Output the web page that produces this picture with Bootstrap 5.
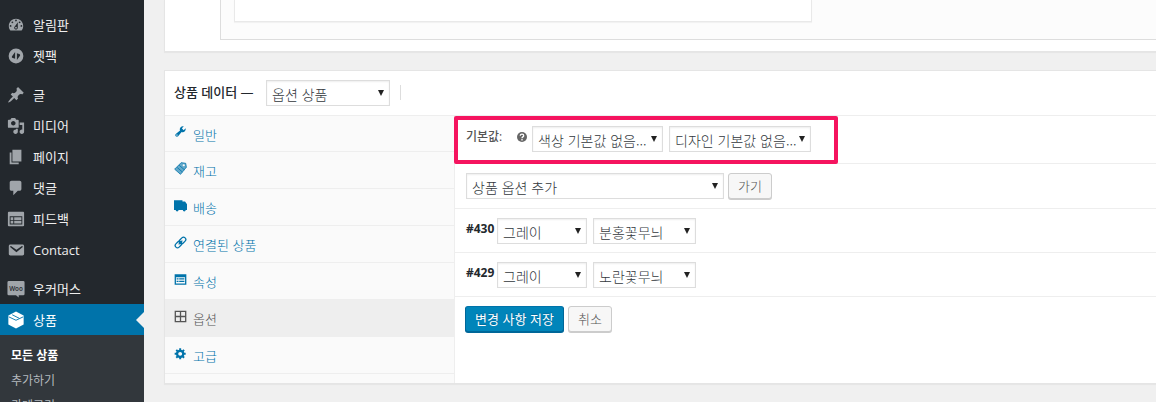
<!DOCTYPE html>
<html lang="ko">
<head>
<meta charset="utf-8">
<meta name="viewport" content="width=device-width, initial-scale=1">
<title>상품 편집</title>
<link href="https://cdn.jsdelivr.net/npm/bootstrap@5.3.0/dist/css/bootstrap.min.css" rel="stylesheet">
<script src="https://cdn.jsdelivr.net/npm/bootstrap@5.3.0/dist/js/bootstrap.bundle.min.js"></script>
<style>
body{font-family:"Open Sans","Noto Sans CJK KR",sans-serif;font-size:13px;line-height:20px;color:#444;background:#f0f0f0}
a{text-decoration:none}
svg{fill:currentColor;flex:none}
.side{width:144px;background:#23282d;padding-top:9px}
.side-item{height:31px;padding-left:6px;gap:7px;color:#eee}
.side-item svg{width:20px;height:20px;padding:1px;color:#a0a5aa}
.side-gap{margin-top:8px}
.side-item.current{background:#0073aa;color:#fff;position:relative}
.side-item.current svg{color:#fff}
.side-item.current::after{content:"";position:absolute;right:0;top:8px;border:8px solid transparent;border-right-color:#f0f0f0;border-left:0}
.side-sub{background:#32373c;padding:8px 0 7px 11px}
.side-sub a{height:25px;line-height:25px;font-size:12px;color:#b4b9be;display:block}
.side-sub a.current{color:#fff;font-weight:700}
.main-col{padding-left:20px}
.panel-box{background:#fff;border:1px solid #e5e5e5;border-right:0;box-shadow:0 1px 1px rgba(0,0,0,.04)}
.editor-panel{height:52px;padding-left:55px;margin-bottom:18px}
.editor-frame{height:40px;background:#fcfcfc;border:solid #ddd;border-width:0 0 1px 1px;padding-left:13px}
.editor-card{height:22px;width:578px;background:#fff;border:solid #e9e9e9;border-width:0 1px 1px;box-shadow:0 1px 1px rgba(0,0,0,.04)}
.data-head{height:45px;padding:0 9px;border-bottom:1px solid #eee}
.data-head label{font-size:13px;font-weight:500;color:#23282d;width:92px;margin-bottom:3px}
.head-rule{width:1px;height:15px;background:#ddd;margin-left:10px;margin-bottom:2px}
.tabs-col{width:290px;background:#fafafa;border-right:1px solid #eee}
.tab-row{height:37px;padding-left:9px;gap:6px;border-bottom:1px solid #eee;color:#0073aa}
.tab-row:first-child{height:36px}
.tab-row.current{background:#eee;color:#555}
.tab-row svg{width:13px;height:13px;margin-bottom:4px}
.tab-row,.pick,.wp-btn{font-family:"Noto Sans CJK KR",sans-serif;font-weight:300}
.tab-row span{padding-top:2px}
.tabs-end{height:9px}
.pick{appearance:none;height:26px;padding:2px 14px 0 5px;border:1px solid #ddd;border-radius:0;font-size:14px;line-height:20px;color:#32373c;
background:#fff url("data:image/svg+xml,%3Csvg xmlns='http://www.w3.org/2000/svg' width='6' height='6'%3E%3Cpath d='M0 0h6L3 6z' fill='%23222'/%3E%3C/svg%3E") no-repeat right 5px top 9px;box-shadow:inset 0 1px 2px rgba(0,0,0,.07)}
.pick-next{margin-left:6px}
.w-type{width:124px}.w-color{width:131px}.w-design{width:142px}.w-add{width:258px}.w-c{width:90px}.w-d{width:103px}
.opt-row{height:44px;padding-left:11px;border-bottom:1px solid #eee;position:relative}
.opt-row.first{height:48px;padding-bottom:1px}
.opt-row.adder{height:45px}
.opt-row strong{width:31px;color:#23282d;font-size:12px;margin-bottom:3px}
.def-label{width:51px;margin-bottom:4px;font-size:12px;color:#555;font-weight:500}
.help{width:10px;height:10px;color:#666;margin-right:5px;margin-bottom:5px}
.callout{position:absolute;left:-1px;top:0;width:384px;height:48px;border:4px solid #f5145f;border-radius:2px;pointer-events:none;z-index:1}
.wp-btn{height:26px;padding:0 9px;font-size:13px;line-height:22px;border:1px solid #ccc;border-radius:3px;background:#f7f7f7;color:#555;box-shadow:0 1px 0 #ccc}
.wp-btn.blue{background:#0085ba;border-color:#0073aa #006799 #006799;color:#fff;font-weight:400;box-shadow:0 1px 0 #006799;text-shadow:0 -1px 1px #006799}
.save-row{padding:9px 10px}
</style>
</head>
<body>
<div class="d-flex vh-100 overflow-hidden">
<nav class="side flex-shrink-0" aria-label="관리 메뉴">
<a href="#" class="side-item d-flex align-items-center"><svg viewBox="0 0 20 20"><path d="M3.76 16h12.48c1.1-1.37 1.76-3.11 1.76-5 0-4.42-3.58-8-8-8s-8 3.58-8 8c0 1.89.66 3.63 1.76 5zM10 4c.55 0 1 .45 1 1s-.45 1-1 1-1-.45-1-1 .45-1 1-1zM6 6c.55 0 1 .45 1 1s-.45 1-1 1-1-.45-1-1 .45-1 1-1zm8 0c.55 0 1 .45 1 1s-.45 1-1 1-1-.45-1-1 .45-1 1-1zm-5.37 5.55L12 7v6c0 1.1-.9 2-2 2s-2-.9-2-2c0-.57.24-1.08.63-1.45zM4 10c.55 0 1 .45 1 1s-.45 1-1 1-1-.45-1-1 .45-1 1-1zm12 0c.55 0 1 .45 1 1s-.45 1-1 1-1-.45-1-1 .45-1 1-1zm-5 3c0-.55-.45-1-1-1s-1 .45-1 1 .45 1 1 1 1-.45 1-1z" fill-rule="evenodd"/></svg>알림판</a>
<a href="#" class="side-item d-flex align-items-center"><svg viewBox="0 0 20 20"><path fill-rule="evenodd" d="M10 1.800a8.200 8.200 0 1 0 0 16.400a8.200 8.200 0 0 0 0-16.400zM9 5.500v7.500l-2.500-.7c-1-.3-1.400-1.200-.9-2.100zM11 14.500V7l2.500.7c1 .3 1.400 1.200.9 2.100z"/></svg>젯팩</a>
<a href="#" class="side-item side-gap d-flex align-items-center"><svg viewBox="0 0 20 20"><path d="M10.440 3.020l1.820-1.820 6.360 6.350-1.830 1.820c-1.050-.68-2.480-.57-3.410.36l-.75.75c-.92.93-1.040 2.350-.35 3.410l-1.830 1.820-2.410-2.410-2.800 2.790c-.42.42-3.380 2.710-3.800 2.290s1.860-3.390 2.280-3.810l2.790-2.790L4.100 9.360l1.830-1.820c1.050.69 2.480.57 3.400-.36l.75-.75c.93-.92 1.050-2.350.36-3.410z"/></svg>글</a>
<a href="#" class="side-item d-flex align-items-center"><svg viewBox="0 0 20 20"><path fill-rule="evenodd" d="M13 11V4c0-.55-.45-1-1-1h-1.670L9 1H5L3.670 3H2c-.55 0-1 .45-1 1v7c0 .55.45 1 1 1h10c.55 0 1-.45 1-1zM7 4.500c1.380 0 2.500 1.120 2.500 2.500S8.380 9.500 7 9.500 4.500 8.380 4.500 7 5.620 4.500 7 4.500zM14 6h5v10.500c0 1.380-1.120 2.500-2.500 2.500S14 17.880 14 16.500s1.120-2.500 2.500-2.500c.17 0 .34.02.5.05V9h-3V6zm-4 8.050V13h2v3.500c0 1.380-1.120 2.500-2.500 2.500S7 17.880 7 16.500 8.120 14 9.500 14c.17 0 .34.02.5.05z"/></svg>미디어</a>
<a href="#" class="side-item d-flex align-items-center"><svg viewBox="0 0 20 20"><path d="M6 15V2h10v13H6zm-1 1h8v2H3V5h2v11z"/></svg>페이지</a>
<a href="#" class="side-item d-flex align-items-center"><svg viewBox="0 0 20 20"><path d="M5 2h9c1.100 0 2 .9 2 2v7c0 1.100-.9 2-2 2h-2l-5 5v-5H5c-1.100 0-2-.9-2-2V4c0-1.100.9-2 2-2z"/></svg>댓글</a>
<a href="#" class="side-item d-flex align-items-center"><svg viewBox="0 0 20 20"><path fill-rule="evenodd" d="M2 2h16c.55 0 1 .45 1 1v14c0 .55-.45 1-1 1H2c-.55 0-1-.45-1-1V3c0-.55.45-1 1-1zm15 14V7H3v9h14z"/><path d="M4 8v3h3V8zm4 0v3h8V8H8zm-4 4v3h3v-3H4zm4 0v3h8v-3H8z"/></svg>피드백</a>
<a href="#" class="side-item d-flex align-items-center"><svg viewBox="0 0 20 20"><path fill-rule="evenodd" d="M3.870 4h13.250C18.370 4 19 4.590 19 5.790v8.420c0 1.190-.63 1.790-1.880 1.790H3.870c-1.250 0-1.880-.6-1.880-1.790V5.790c0-1.200.63-1.790 1.880-1.790zm6.620 8.600l6.740-5.530c.24-.2.43-.66.13-1.070-.29-.41-.82-.42-1.170-.17l-5.700 3.860L4.800 5.830c-.35-.25-.88-.24-1.170.17-.3.41-.11.87.13 1.070z"/></svg>Contact</a>
<a href="#" class="side-item side-gap d-flex align-items-center"><svg viewBox="0 0 20 20"><path d="M2 1h16a1.500 1.500 0 0 1 1.500 1.500v13a1.500 1.500 0 0 1-1.500 1.500h-5v2.500L10 17H2A1.500 1.500 0 0 1 .5 15.500v-13A1.500 1.500 0 0 1 2 1z"/><text x="10" y="12" font-size="7" font-weight="600" text-anchor="middle" fill="#23282d">Woo</text></svg>우커머스</a>
<a href="#" class="side-item current d-flex align-items-center"><svg viewBox="0 0 20 20"><path d="M10 .5l8.500 4.500v10L10 19.500 1.500 15V5z"/><path d="M2 6.500l8 3.800 8-3.800M5.800 4.200l8 4" fill="none" stroke="#0073aa"/></svg>상품</a>
<div class="side-sub"><a href="#" class="current">모든 상품</a><a href="#">추가하기</a><a href="#">카테고리</a></div>
</nav>
<main class="main-col flex-grow-1">
<section class="panel-box editor-panel border-top-0"><div class="editor-frame"><div class="editor-card"></div></div></section>
<section class="panel-box">
<div class="data-head d-flex align-items-center"><label for="ptype">상품 데이터 —</label><select id="ptype" class="pick w-type"><option>옵션 상품</option></select><div class="head-rule"></div></div>
<div class="d-flex">
<nav class="tabs-col flex-shrink-0" aria-label="상품 데이터">
<a href="#" class="tab-row d-flex align-items-center"><svg viewBox="0 0 20 20"><path fill-rule="evenodd" d="M16.680 9.770c-1.340 1.340-3.300 1.670-4.950.99l-5.410 6.520c-.99.99-2.590.99-3.580 0s-.99-2.590 0-3.570l6.520-5.420c-.68-1.650-.35-3.610.99-4.950 1.280-1.280 3.120-1.620 4.720-1.060l-2.890 2.890 2.820 2.820 2.860-2.870c.53 1.580.18 3.390-1.080 4.650zM3.810 16.210c.4.39 1.040.39 1.430 0 .4-.4.4-1.040 0-1.430-.39-.4-1.030-.4-1.430 0-.39.39-.39 1.030 0 1.430z"/></svg><span>일반</span></a>
<a href="#" class="tab-row d-flex align-items-center"><svg viewBox="0 0 20 20"><path d="M11 1l7 1 1 6-9 11-9-8z" fill-opacity=".6"/><path d="M11 1l7 1 1 6-9 11-9-8zM5 8.500l8 7M8 5l8 7" fill="none" stroke="currentColor" stroke-width="1.200"/><circle cx="15" cy="5" r="1.700" fill="#fafafa"/></svg><span>재고</span></a>
<a href="#" class="tab-row d-flex align-items-center"><svg viewBox="0 0 20 20"><path d="M0 2h13v2h4l3 4v9h-2a2.200 2.200 0 0 1-4.400 0H7a2.200 2.200 0 0 1-4.400 0H0z"/></svg><span>배송</span></a>
<a href="#" class="tab-row d-flex align-items-center"><svg viewBox="0 0 20 20"><g transform="rotate(-45 10 10)" fill="none" stroke="currentColor" stroke-width="2"><rect x="0" y="6.500" width="11" height="7" rx="3.500"/><rect x="9" y="6.500" width="11" height="7" rx="3.500"/><path d="M6 10h8"/></g></svg><span>연결된 상품</span></a>
<a href="#" class="tab-row d-flex align-items-center"><svg viewBox="0 0 20 20"><path fill-rule="evenodd" d="M1 2h18v16H1zM3 6.500v9.500h14V6.500z"/><path d="M4 8h3v2H4zm4 0h8v2H8zm-4 4h3v2H4zm4 0h8v2H8z"/></svg><span>속성</span></a>
<a href="#" class="tab-row current d-flex align-items-center"><svg viewBox="0 0 20 20"><path fill-rule="evenodd" d="M1 1h18v18H1zM3 3v6h6V3zm8 0v6h6V3zM3 11v6h6v-6zm8 0v6h6v-6z"/></svg><span>옵션</span></a>
<a href="#" class="tab-row d-flex align-items-center"><svg viewBox="0 0 20 20"><path fill-rule="evenodd" d="M18 12h-2.180c-.17.7-.44 1.350-.81 1.930l1.540 1.540-2.100 2.100-1.540-1.540c-.58.36-1.230.63-1.910.79V19H8v-2.180c-.68-.16-1.330-.43-1.910-.79l-1.540 1.540-2.120-2.120 1.540-1.540c-.36-.58-.63-1.230-.79-1.910H1V9.030h2.170c.16-.7.44-1.350.8-1.940L2.430 5.550l2.100-2.100 1.540 1.540c.58-.37 1.240-.64 1.930-.81V2h3v2.180c.68.16 1.330.43 1.910.79l1.540-1.540 2.120 2.120-1.540 1.540c.36.59.64 1.240.8 1.940H18V12zm-8.500 1.500c1.660 0 3-1.340 3-3s-1.340-3-3-3-3 1.340-3 3 1.340 3 3 3z"/></svg><span>고급</span></a>
<div class="tabs-end"></div>
</nav>
<div class="flex-grow-1">
<div class="opt-row first d-flex align-items-center"><label class="def-label" for="dcolor">기본값:</label><svg class="help" viewBox="0 0 10 10"><circle cx="5" cy="5" r="5"/><path d="M3.300 3.800C3.300 1.500 6.700 1.700 6.700 3.700 6.700 5 5 4.800 5 6.200M5 7.100v1.300" fill="none" stroke="#fff" stroke-width="1.300"/></svg><select id="dcolor" class="pick w-color"><option>색상 기본값 없음...</option></select><select class="pick w-design pick-next" aria-label="디자인 기본값"><option>디자인 기본값 없음...</option></select><div class="callout"></div></div>
<div class="opt-row adder d-flex align-items-center"><select class="pick w-add me-1" aria-label="일괄 작업"><option>상품 옵션 추가</option></select><button type="button" class="wp-btn">가기</button></div>
<div class="opt-row d-flex align-items-center"><strong>#430</strong><select class="pick w-c" aria-label="#430 색상"><option>그레이</option></select><select class="pick w-d pick-next" aria-label="#430 디자인"><option>분홍꽃무늬</option></select></div>
<div class="opt-row d-flex align-items-center"><strong>#429</strong><select class="pick w-c" aria-label="#429 색상"><option>그레이</option></select><select class="pick w-d pick-next" aria-label="#429 디자인"><option>노란꽃무늬</option></select></div>
<div class="save-row d-flex gap-1"><button type="button" class="wp-btn blue">변경 사항 저장</button><button type="button" class="wp-btn">취소</button></div>
</div>
</div>
</section>
</main>
</div>
</body>
</html>
